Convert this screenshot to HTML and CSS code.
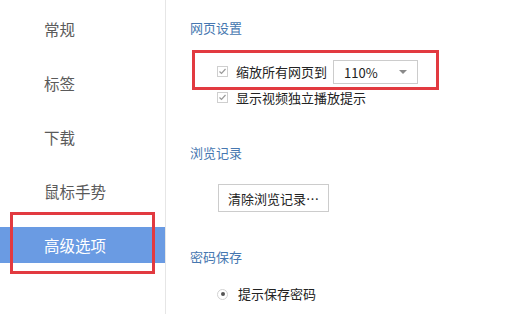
FILE: index.html
```html
<!DOCTYPE html>
<html lang="zh-CN">
<head>
<meta charset="utf-8">
<link rel="stylesheet" href="styles.css">
</head>
<body>
<div class="app">
  <nav class="sidebar">
    <div class="nav-item">常规</div>
    <div class="nav-item">标签</div>
    <div class="nav-item">下载</div>
    <div class="nav-item">鼠标手势</div>
    <div class="nav-item active">高级选项<span class="mark mark-nav"></span></div>
  </nav>
  <main class="content">
    <h2 class="section-title">网页设置</h2>
    <div class="row row-zoom">
      <span class="checkbox"><svg viewBox="0 0 11 11" width="11" height="11"><path d="M2.5 5.5 L4.5 7.5 L8.5 3" fill="none" stroke="#9a9a9a" stroke-width="1.2"/></svg></span>
      <span class="label">缩放所有网页到</span>
      <span class="select"><span class="select-value">110%</span><span class="arrow"></span></span>
      <span class="mark mark-zoom"></span>
    </div>
    <div class="row row-video">
      <span class="checkbox"><svg viewBox="0 0 11 11" width="11" height="11"><path d="M2.5 5.5 L4.5 7.5 L8.5 3" fill="none" stroke="#9a9a9a" stroke-width="1.2"/></svg></span>
      <span class="label">显示视频独立播放提示</span>
    </div>
    <h2 class="section-title title-history">浏览记录</h2>
    <button class="btn">清除浏览记录…</button>
    <h2 class="section-title title-password">密码保存</h2>
    <div class="row row-radio">
      <span class="radio"><span class="radio-dot"></span></span>
      <span class="label">提示保存密码</span>
    </div>
  </main>
</div>
</body>
</html>
```

FILE: styles.css
```css
html, body {
  margin: 0;
  padding: 0;
  background: #ffffff;
}
body {
  font-family: "Noto Sans CJK SC", "Noto Sans", sans-serif;
  width: 517px;
  height: 314px;
  overflow: hidden;
}
.app {
  display: flex;
  height: 314px;
}
.sidebar {
  width: 165px;
  flex: none;
  border-right: 1px solid #e6e6e6;
  padding-top: 11px;
  display: flex;
  flex-direction: column;
  gap: 18px;
  box-sizing: content-box;
}
.nav-item {
  height: 36px;
  line-height: 36px;
  padding-left: 44px;
  font-size: 15.5px;
  color: #5a5a5a;
  position: relative;
}
.nav-item.active {
  background: #6a9be3;
  color: #ffffff;
}
.mark {
  position: absolute;
  border: 3px solid #e23a40;
  box-sizing: border-box;
  pointer-events: none;
}
.mark-nav {
  left: 10px;
  top: -15px;
  width: 145px;
  height: 62px;
}
.content {
  flex: 1;
  padding: 18px 0 0 24px;
  display: flex;
  flex-direction: column;
  align-items: flex-start;
}
.section-title {
  margin: 0;
  font-size: 13px;
  font-weight: normal;
  line-height: 20px;
  height: 20px;
  color: #4677b0;
}
.row {
  display: flex;
  align-items: center;
  position: relative;
  margin-left: 27px;
  font-size: 13px;
  color: #222;
}
.row-zoom {
  margin-top: 22px;
  height: 24px;
}
.row-video {
  margin-top: 4px;
  height: 20px;
}
.checkbox {
  width: 11px;
  height: 11px;
  border: 1px solid #cfcfcf;
  box-sizing: border-box;
  margin-right: 8px;
  display: flex;
  align-items: center;
  justify-content: center;
  position: relative;
  top: -1px;
}
.checkbox svg {
  display: block;
  flex: none;
}
.label {
  line-height: 20px;
}
.select {
  margin-left: 6px;
  width: 85px;
  height: 24px;
  border: 1px solid #cccccc;
  box-sizing: border-box;
  display: flex;
  align-items: center;
  justify-content: space-between;
  padding: 0 10px 0 10px;
}
.select-value {
  font-size: 13px;
  color: #222;
}
.arrow {
  width: 0;
  height: 0;
  border-left: 4px solid transparent;
  border-right: 4px solid transparent;
  border-top: 4px solid #8a8a8a;
}
.mark-zoom {
  left: -25px;
  top: -10px;
  width: 247px;
  height: 40px;
}
.title-history {
  margin-top: 35px;
}
.btn {
  margin: 21px 0 0 28px;
  width: 111px;
  height: 28px;
  border: 1px solid #cccccc;
  background: #ffffff;
  font-family: "Noto Sans CJK SC", "Noto Sans", sans-serif;
  font-size: 13px;
  color: #222;
  padding: 0;
}
.title-password {
  margin-top: 35px;
}
.row-radio {
  margin-top: 17px;
  height: 20px;
}
.radio {
  width: 11px;
  height: 11px;
  border: 1px solid #d2d2d2;
  border-radius: 50%;
  box-sizing: border-box;
  margin-right: 10px;
  display: flex;
  align-items: center;
  justify-content: center;
}
.radio-dot {
  width: 4px;
  height: 4px;
  border-radius: 50%;
  background: #555;
}
```
